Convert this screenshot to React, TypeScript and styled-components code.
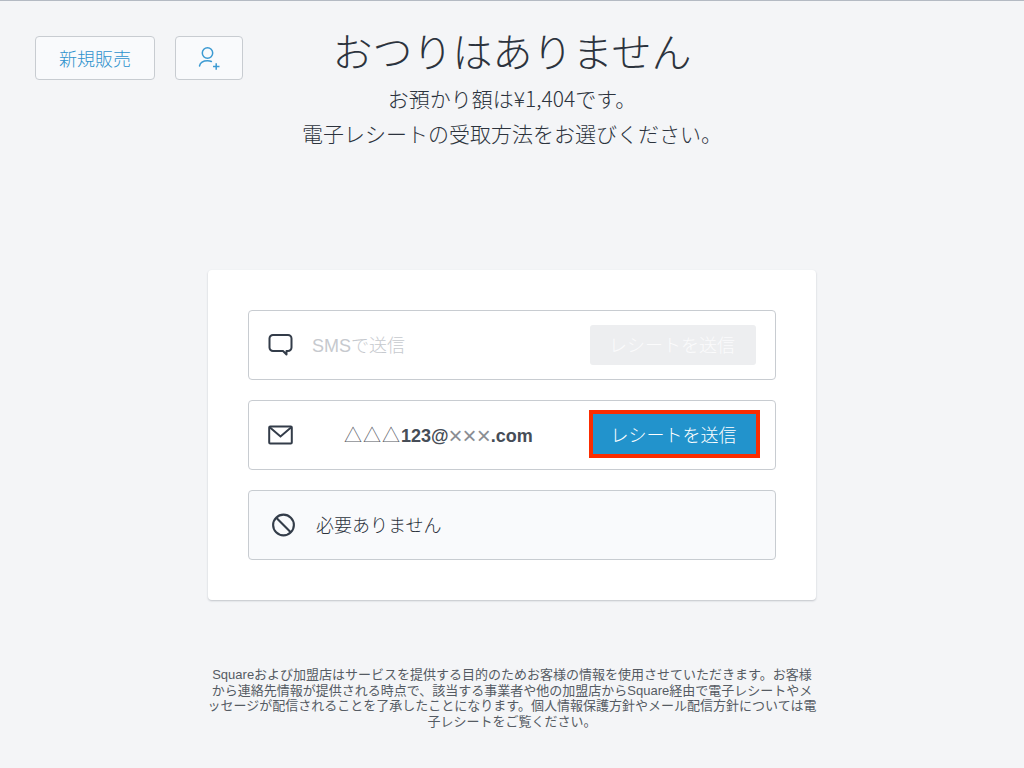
import React from "react";
import styled, { createGlobalStyle } from "styled-components";

const GlobalStyle = createGlobalStyle`
  html, body {
    margin: 0;
    padding: 0;
    background: #f4f5f7;
    font-family: "Liberation Sans", "Noto Sans CJK JP", sans-serif;
    color: #3d4550;
  }
  * {
    box-sizing: border-box;
  }
`;

const Page = styled.div`
  width: 1024px;
  height: 768px;
  overflow: hidden;
  background: #f4f5f7;
  border-top: 1px solid #b4bac3;
  display: flex;
  flex-direction: column;
  align-items: center;
`;

const Header = styled.header`
  width: 100%;
  height: 269px;
  display: grid;
  grid-template-columns: 1fr auto 1fr;
  align-items: start;
`;

const Actions = styled.div`
  display: flex;
  gap: 20px;
  padding: 35px 0 0 35px;
`;

const ActionButton = styled.button<{ $wide?: boolean }>`
  width: ${(p) => (p.$wide ? "120px" : "68px")};
  height: 44px;
  padding: 0 0 1px;
  display: flex;
  align-items: center;
  justify-content: center;
  background: #f9fafc;
  border: 1px solid #c8ccd1;
  border-radius: 4px;
  color: #2f92cd;
  font-family: inherit;
  font-size: 18px;
  font-weight: 300;
`;

const Heading = styled.div`
  padding-top: 27px;
  text-align: center;
`;

const Title = styled.h1`
  margin: 0;
  font-size: 40px;
  line-height: 50px;
  font-weight: 300;
  color: #2c333d;
`;

const Sub = styled.p`
  margin: 0;
  font-family: "Noto Sans CJK JP", "Liberation Sans", sans-serif;
  font-size: 21px;
  line-height: 35px;
  font-weight: 300;
  color: #2c333d;
  &:first-of-type {
    margin-top: 3px;
  }
`;

const Card = styled.main`
  width: 608px;
  height: 330px;
  padding: 40px;
  display: flex;
  flex-direction: column;
  gap: 20px;
  background: #fff;
  border-radius: 4px;
  box-shadow: 0 1px 2px rgba(60, 70, 85, 0.28);
`;

const Row = styled.div<{ $muted?: boolean }>`
  height: 70px;
  display: flex;
  align-items: center;
  padding: 0 19px;
  background: ${(p) => (p.$muted ? "#f9fafc" : "#fff")};
  border: 1px solid #c8ccd1;
  border-radius: 4px;
`;

const IconSlot = styled.span<{ $inset?: boolean }>`
  width: 25px;
  height: 24px;
  flex: none;
  margin-left: ${(p) => (p.$inset ? "3px" : "0")};
  display: flex;
  align-items: center;
  justify-content: center;
  color: #333c49;
`;

const Field = styled.span<{ $tone?: "placeholder" | "value" }>`
  flex: 1;
  margin-bottom: 2px;
  font-size: 18px;
  color: ${(p) =>
    p.$tone === "placeholder" ? "#c6c9ce" : p.$tone === "value" ? "#464d57" : "#2c333d"};
  font-weight: ${(p) => (p.$tone === "value" ? 700 : 300)};
  padding-left: ${(p) =>
    p.$tone === "value" ? "51px" : p.$tone === "placeholder" ? "19px" : "20px"};
`;

const Triangles = styled.span`
  font-weight: 300;
  color: #55595f;
  letter-spacing: 1px;
`;

const Crosses = styled.span`
  font-size: 24px;
  line-height: 0;
  font-weight: 300;
  vertical-align: -2px;
  color: #8a8e93;
`;

const SendButton = styled.button<{ $active?: boolean }>`
  width: ${(p) => (p.$active ? "163px" : "166px")};
  height: 40px;
  flex: none;
  margin-bottom: ${(p) => (p.$active ? "2px" : "0")};
  padding: ${(p) => (p.$active ? "0 2px 0 0" : "0 2px 2px 0")};
  background: ${(p) => (p.$active ? "#2293cc" : "#edeef0")};
  color: ${(p) => (p.$active ? "#fff" : "#fbfbfc")};
  border: none;
  border-radius: ${(p) => (p.$active ? "0" : "3px")};
  outline: ${(p) => (p.$active ? "4px solid #fb2c00" : "none")};
  font-family: inherit;
  font-size: 18px;
  font-weight: 300;
`;

const Notice = styled.p`
  width: 612px;
  margin: 67px 0 0;
  font-size: 13px;
  line-height: 15.5px;
  text-align: center;
  color: #555b63;
`;

const PersonPlusIcon = () => (
  <svg width="24" height="26" viewBox="0 0 24 26" fill="none" stroke="#3c9ad2" strokeWidth="1.5">
    <circle cx="10.5" cy="8" r="5.2" />
    <path d="M2.5 21c.7-3.3 3.6-5.2 8-5.2 1.5 0 2.8.2 3.9.7" strokeLinecap="round" />
    <path d="M16 21.5h6.5M19.2 18.3v6.4" />
  </svg>
);

const ChatIcon = () => (
  <svg width="25" height="24" viewBox="0 0 25 24" fill="none" stroke="currentColor" strokeWidth="2" strokeLinejoin="round">
    <path d="M5 2h15a3.5 3.5 0 0 1 3.5 3.5v9a3.5 3.5 0 0 1-3.5 3.5h-1.5v3.5L15 18H5a3.5 3.5 0 0 1-3.5-3.5v-9A3.5 3.5 0 0 1 5 2z" />
  </svg>
);

const MailIcon = () => (
  <svg width="25" height="20" viewBox="0 0 25 20" fill="none" stroke="currentColor" strokeWidth="2">
    <rect x="1.2" y="1.5" width="22.6" height="17" rx="1" />
    <path d="M2 2.5l10.5 9 10.5-9" />
  </svg>
);

const BlockIcon = () => (
  <svg width="26" height="26" viewBox="0 0 26 26" fill="none" stroke="currentColor" strokeWidth="2.2">
    <circle cx="13" cy="13" r="10.8" />
    <path d="M5.5 5.5l15 15" />
  </svg>
);

export default function App() {
  return (
    <Page>
      <GlobalStyle />
      <Header>
        <Actions>
          <ActionButton $wide>新規販売</ActionButton>
          <ActionButton>
            <PersonPlusIcon />
          </ActionButton>
        </Actions>
        <Heading>
          <Title>おつりはありません</Title>
          <Sub>お預かり額は¥1,404です。</Sub>
          <Sub>電子レシートの受取方法をお選びください。</Sub>
        </Heading>
      </Header>
      <Card>
        <Row>
          <IconSlot>
            <ChatIcon />
          </IconSlot>
          <Field $tone="placeholder">SMSで送信</Field>
          <SendButton>レシートを送信</SendButton>
        </Row>
        <Row>
          <IconSlot>
            <MailIcon />
          </IconSlot>
          <Field $tone="value">
            <Triangles>△△△</Triangles>123@<Crosses>×××</Crosses>.com
          </Field>
          <SendButton $active>レシートを送信</SendButton>
        </Row>
        <Row $muted>
          <IconSlot $inset>
            <BlockIcon />
          </IconSlot>
          <Field>必要ありません</Field>
        </Row>
      </Card>
      <Notice>
        Squareおよび加盟店はサービスを提供する目的のためお客様の情報を使用させていただきます。お客様
        <br />
        から連絡先情報が提供される時点で、該当する事業者や他の加盟店からSquare経由で電子レシートやメ
        <br />
        ッセージが配信されることを了承したことになります。個人情報保護方針やメール配信方針については電
        <br />
        子レシートをご覧ください。
      </Notice>
    </Page>
  );
}
